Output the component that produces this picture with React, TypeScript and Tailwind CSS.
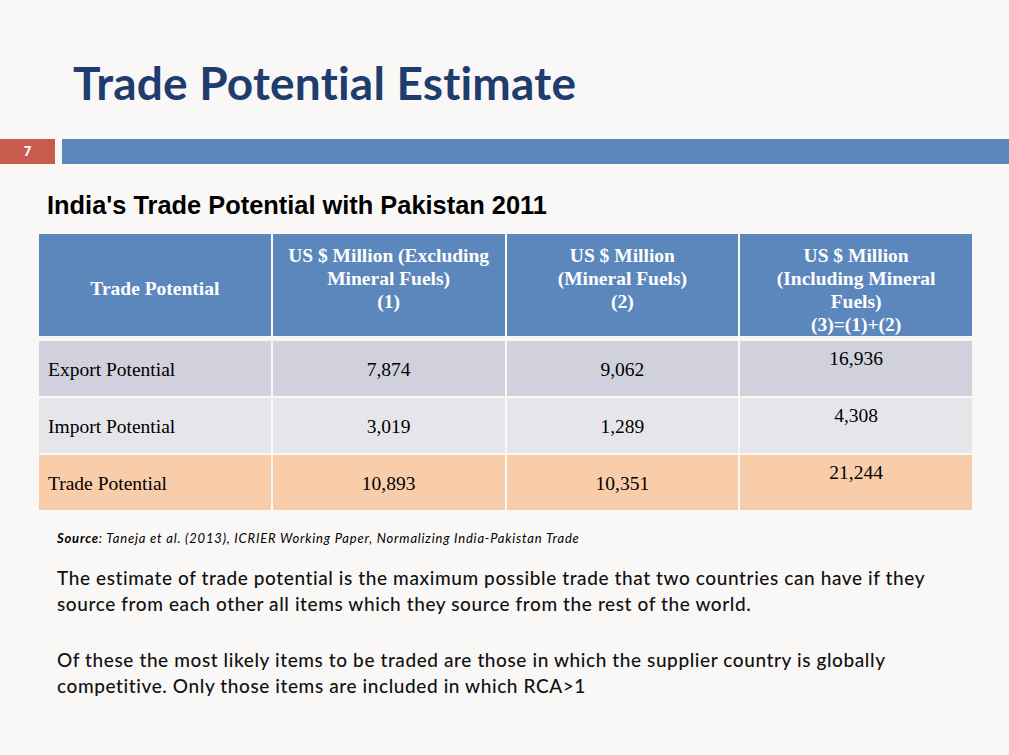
import React from "react";

const serif = { fontFamily: '"Liberation Serif", "Times New Roman", serif' };
const geo = { fontFamily: 'Lato, "Noto Sans", sans-serif' };

export default function App() {
  const rows = [
    { label: "Export Potential", a: "7,874", b: "9,062", c: "16,936", bg: "bg-[#d0d1dc]" },
    { label: "Import Potential", a: "3,019", b: "1,289", c: "4,308", bg: "bg-[#e6e6ea]" },
    { label: "Trade Potential", a: "10,893", b: "10,351", c: "21,244", bg: "bg-[#f9cdaa]" },
  ];
  return (
    <div className="w-[1009px] h-[755px] bg-[#f9f8f7] overflow-hidden flex flex-col">
      <div className="h-[139px] flex items-start">
        <h1
          className="ml-[73px] mt-[55px] text-[46px] leading-[56px] font-bold text-[#1f3c6e] tracking-[0.2px]"
          style={geo}
        >
          Trade Potential Estimate
        </h1>
      </div>
      <div className="flex h-[25px] gap-[7px]">
        <div className="w-[55px] bg-[#c85b4d] flex items-center justify-center">
          <span className="text-white text-[13px] font-black" style={geo}>7</span>
        </div>
        <div className="flex-1 bg-[#5b87ba]" />
      </div>
      <div
        className="ml-[47px] mt-[27px] text-[25.4px] leading-[28px] font-bold text-black"
        style={{ fontFamily: '"Liberation Sans", Arial, sans-serif' }}
      >
        India's Trade Potential with Pakistan 2011
      </div>
      <div className="ml-[39px] mt-[15px] w-[933px] grid grid-cols-4 gap-x-[2px] bg-[#f9f8f7]" style={serif}>
        <div className="h-[102px] bg-[#5b87bd] pt-[6px] flex items-center justify-center text-white font-bold text-[19.5px] leading-[23px] text-center">
          Trade Potential
        </div>
        <div className="h-[102px] bg-[#5b87bd] pt-[10px] text-white font-bold text-[19.5px] leading-[23px] text-center">
          US $ Million (Excluding<br />Mineral Fuels)<br />(1)
        </div>
        <div className="h-[102px] bg-[#5b87bd] pt-[10px] text-white font-bold text-[19.5px] leading-[23px] text-center">
          US $ Million<br />(Mineral Fuels)<br />(2)
        </div>
        <div className="h-[102px] bg-[#5b87bd] pt-[10px] text-white font-bold text-[19.5px] leading-[23px] text-center">
          US $ Million<br />(Including Mineral<br />Fuels)<br />(3)=(1)+(2)
        </div>
        <div className="col-span-4 h-[5px]" />
        {rows.map((r, i) => (
          <React.Fragment key={r.label}>
            <div className={`${r.bg} h-[55px] pt-[2px] flex items-center pl-[9px] text-[19.5px] text-black`}>{r.label}</div>
            <div className={`${r.bg} h-[55px] pt-[2px] flex items-center justify-center text-[19.5px] text-black`}>{r.a}</div>
            <div className={`${r.bg} h-[55px] pt-[2px] flex items-center justify-center text-[19.5px] text-black`}>{r.b}</div>
            <div className={`${r.bg} h-[55px] pt-[6px] text-center text-[19.5px] leading-[23px] text-black`}>{r.c}</div>
            {i < rows.length - 1 && <div className="col-span-4 h-[2px]" />}
          </React.Fragment>
        ))}
      </div>
      <div className="ml-[57px] mt-[21px] text-[13px] leading-[14px] text-black italic tracking-[0.8px]" style={geo}>
        <span className="font-bold">Source</span>: Taneja et al. (2013), ICRIER Working Paper, Normalizing India-Pakistan Trade
      </div>
      <div className="ml-[57px] mt-[20px] w-[940px] text-[19px] leading-[26px] text-[#111] font-medium tracking-[0.6px]" style={geo}>
        <p>
          The estimate of trade potential is the maximum possible trade that two countries can have if they
          <br />
          source from each other all items which they source from the rest of the world.
        </p>
        <p className="mt-[30px]">
          Of these the most likely items to be traded are those in which the supplier country is globally
          <br />
          competitive. Only those items are included in which RCA&gt;1
        </p>
      </div>
    </div>
  );
}
